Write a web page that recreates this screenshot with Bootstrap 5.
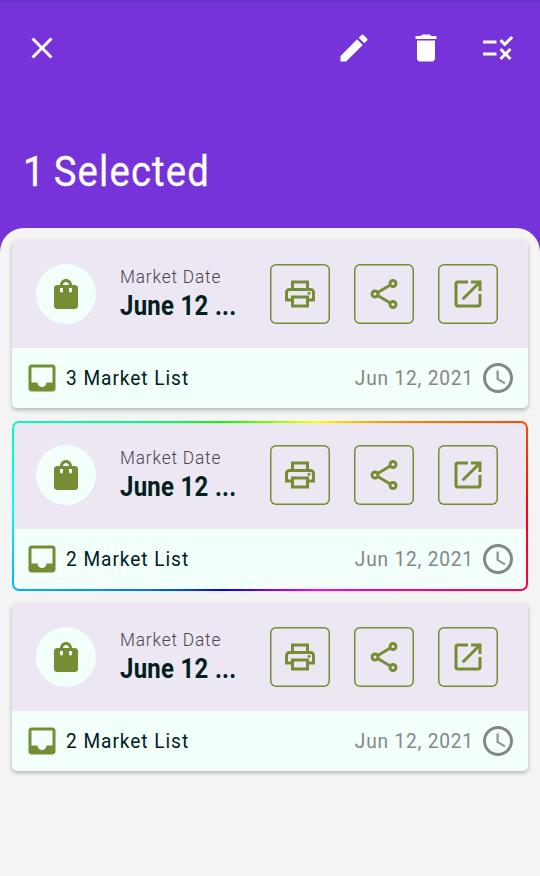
<!DOCTYPE html>
<html lang="en">
<head>
<meta charset="utf-8">
<meta name="viewport" content="width=device-width, initial-scale=1">
<title>Market lists</title>
<link href="https://cdn.jsdelivr.net/npm/bootstrap@5.3.0/dist/css/bootstrap.min.css" rel="stylesheet">
<style>
body{background:#7533d9;font-family:Roboto,"Liberation Sans",sans-serif;min-height:100vh;color:#00201c}
svg{width:36px;height:36px;fill:currentColor;display:block;flex:none}
.screen{height:876px;overflow:hidden}
.app-head{height:228px;background:linear-gradient(#6930c2,#7533d9 4px);padding:30px 24px 0}
.tools{gap:36px}
.fit{display:inline-block;transform-origin:0 50%;white-space:nowrap}
.title-text{font-size:43px;line-height:52px;margin:79px 0 0 -1px;font-weight:400;height:52px}
.title-text .fit{transform:scaleX(.89);letter-spacing:1.3px;word-spacing:-3px;-webkit-text-stroke:.3px currentColor}
.sheet{background:#f4f4f4;border-radius:24px 24px 0 0;padding:12px 12px 0;gap:13.5px}
.market{height:168px;border-radius:5px;overflow:hidden;background:#f2fffb;box-shadow:0 2px 4px rgba(0,0,0,.27)}
.market-top{height:108px;background:#ede7f3;padding:0 30px 0 24px}
.bag{width:60px;height:60px;background:#f2fffb;color:#768d34;margin-right:24px}
.label-text{font-size:19px;line-height:24px;font-weight:300;color:#49454f;height:24px}
.label-text .fit{letter-spacing:.9px;transform:scaleX(.91)}
.name-text{font-size:27.5px;line-height:34px;font-weight:700;height:34px}
.name-text .fit{transform:scaleX(.87);letter-spacing:.35px}
.names{width:126px;margin-right:24px;padding-bottom:1px}
.act{width:60px;height:60px;border:0;box-shadow:inset 0 0 0 1.5px #768d34;border-radius:6px;color:#768d34;background:none;padding:0}
.acts{gap:24px}
.market-foot{height:60px;padding:0 12px;font-size:21px;line-height:28px}
.olive{color:#768d34}
.count-text{margin-left:6px}
.count-text .fit{transform:scaleX(.91);letter-spacing:1.05px}
.when{color:#858786;gap:7px}
.when .fit{transform:scaleX(.91);transform-origin:100% 50%;letter-spacing:.9px;margin-right:-1px}
.picked{box-shadow:none;height:170px;border-radius:7px;padding:2px;margin:-.5px 0 -1.5px;background:conic-gradient(from 90deg,#f00,#f0f,#00f,#0ff,#0f0,#ff0,#f00)}
.picked .market-top{height:106px;padding:0 28px 2px 22px;border-radius:5px 5px 0 0}
.picked .market-foot{background:#f2fffb;padding:0 10px;border-radius:0 0 5px 5px}
</style>
</head>
<body>
<svg class="d-none" aria-hidden="true">
<symbol id="bag" viewBox="0 0 24 24"><path d="M18 6h-2c0-2.21-1.79-4-4-4S8 3.79 8 6H6c-1.1 0-2 .9-2 2v12c0 1.1.9 2 2 2h12c1.1 0 2-.9 2-2V8c0-1.1-.9-2-2-2zm-8 4c0 .55-.45 1-1 1s-1-.45-1-1V8h2v2zm2-6c1.1 0 2 .9 2 2h-4c0-1.1.9-2 2-2zm4 6c0 .55-.45 1-1 1s-1-.45-1-1V8h2v2z"/></symbol>
<symbol id="print" viewBox="0 0 24 24"><path d="M19 8h-1V3H6v5H5c-1.66 0-3 1.34-3 3v6h4v4h12v-4h4v-6c0-1.66-1.34-3-3-3zM8 5h8v3H8V5zm8 12v2H8v-4h8v2zm2-2v-2H6v2H4v-4c0-.55.45-1 1-1h14c.55 0 1 .45 1 1v4h-2z"/><circle cx="18" cy="11.5" r="1"/></symbol>
<symbol id="share" viewBox="0 0 24 24"><g fill="none" stroke="currentColor" stroke-width="1.95"><circle cx="18" cy="5" r="2"/><circle cx="6" cy="12" r="2"/><circle cx="18" cy="19" r="2"/><path d="M7.8 10.95 16.2 6.05M7.8 13.05l8.4 4.9"/></g></symbol>
<symbol id="open" viewBox="0 0 24 24"><path d="M19 19H5V5h7V3H5c-1.11 0-2 .9-2 2v14c0 1.1.89 2 2 2h14c1.1 0 2-.9 2-2v-7h-2v7zM14 3v2h3.59l-9.83 9.83 1.41 1.41L19 6.41V10h2V3h-7z"/></symbol>
<symbol id="inbox" viewBox="0 0 24 24"><path d="M19 3H4.99C3.88 3 3 3.9 3 5v14c0 1.1.88 2 1.99 2H19c1.1 0 2-.9 2-2V5c0-1.1-.9-2-2-2zm0 12h-4c0 1.66-1.35 3-3 3s-3-1.34-3-3H4.99V5H19v10z"/></symbol>
<symbol id="clock" viewBox="0 0 24 24"><path d="M11.99 2C6.47 2 2 6.48 2 12s4.47 10 9.99 10C17.52 22 22 17.52 22 12S17.52 2 11.99 2zM12 20c-4.42 0-8-3.58-8-8s3.58-8 8-8 8 3.58 8 8-3.58 8-8 8z"/><path opacity=".9" d="M12.5 7H11v6l5.25 3.15.75-1.23-4.5-2.67z"/></symbol>
</svg>
<div class="screen d-flex flex-column">
<header class="app-head text-white">
<div class="d-flex justify-content-between">
<svg viewBox="0 0 24 24"><path d="M19 6.41 17.59 5 12 10.59 6.41 5 5 6.41 10.59 12 5 17.59 6.41 19 12 13.41 17.59 19 19 17.59 13.41 12z"/></svg>
<div class="d-flex tools">
<svg viewBox="0 0 24 24"><path d="M3 17.25V21h3.75L17.81 9.94l-3.75-3.75L3 17.25zM20.71 7.04a1 1 0 0 0 0-1.41l-2.34-2.34a1 1 0 0 0-1.41 0l-1.83 1.83 3.75 3.75 1.83-1.83z"/></svg>
<svg viewBox="0 0 24 24"><path d="M6 19c0 1.1.9 2 2 2h8c1.1 0 2-.9 2-2V7H6v12zM19 4h-3.5l-1-1h-5l-1 1H5v2h14V4z"/></svg>
<svg viewBox="0 0 24 24"><path d="M16.54 11 13 7.46l1.41-1.41 2.12 2.12 4.24-4.24 1.41 1.41L16.54 11zM11 7H2v2h9V7zm10 6.41L19.59 12 17 14.59 14.41 12 13 13.41 15.59 16 13 18.59 14.41 20 17 17.41 19.59 20 21 18.59 18.41 16 21 13.41zM11 15H2v2h9v-2z"/></svg>
</div>
</div>
<h1 class="title-text"><span class="fit">1 Selected</span></h1>
</header>
<main class="sheet d-flex flex-column flex-grow-1">
<article class="market flex-shrink-0">
<div class="market-top d-flex align-items-center">
<div class="bag rounded-circle d-flex align-items-center justify-content-center"><svg><use href="#bag"/></svg></div>
<div class="names"><div class="label-text"><span class="fit">Market Date</span></div><div class="name-text"><span class="fit">June 12 ...</span></div></div>
<div class="acts d-flex"><button class="act d-flex align-items-center justify-content-center" aria-label="Print"><svg><use href="#print"/></svg></button><button class="act d-flex align-items-center justify-content-center" aria-label="Share"><svg><use href="#share"/></svg></button><button class="act d-flex align-items-center justify-content-center" aria-label="Open"><svg><use href="#open"/></svg></button></div>
</div>
<div class="market-foot d-flex align-items-center"><svg class="olive"><use href="#inbox"/></svg><div class="count-text"><span class="fit">3 Market List</span></div><div class="when d-flex align-items-center ms-auto"><span class="fit">Jun 12, 2021</span><svg><use href="#clock"/></svg></div></div>
</article>
<article class="market picked flex-shrink-0">
<div class="market-top d-flex align-items-center">
<div class="bag rounded-circle d-flex align-items-center justify-content-center"><svg><use href="#bag"/></svg></div>
<div class="names"><div class="label-text"><span class="fit">Market Date</span></div><div class="name-text"><span class="fit">June 12 ...</span></div></div>
<div class="acts d-flex"><button class="act d-flex align-items-center justify-content-center" aria-label="Print"><svg><use href="#print"/></svg></button><button class="act d-flex align-items-center justify-content-center" aria-label="Share"><svg><use href="#share"/></svg></button><button class="act d-flex align-items-center justify-content-center" aria-label="Open"><svg><use href="#open"/></svg></button></div>
</div>
<div class="market-foot d-flex align-items-center"><svg class="olive"><use href="#inbox"/></svg><div class="count-text"><span class="fit">2 Market List</span></div><div class="when d-flex align-items-center ms-auto"><span class="fit">Jun 12, 2021</span><svg><use href="#clock"/></svg></div></div>
</article>
<article class="market flex-shrink-0">
<div class="market-top d-flex align-items-center">
<div class="bag rounded-circle d-flex align-items-center justify-content-center"><svg><use href="#bag"/></svg></div>
<div class="names"><div class="label-text"><span class="fit">Market Date</span></div><div class="name-text"><span class="fit">June 12 ...</span></div></div>
<div class="acts d-flex"><button class="act d-flex align-items-center justify-content-center" aria-label="Print"><svg><use href="#print"/></svg></button><button class="act d-flex align-items-center justify-content-center" aria-label="Share"><svg><use href="#share"/></svg></button><button class="act d-flex align-items-center justify-content-center" aria-label="Open"><svg><use href="#open"/></svg></button></div>
</div>
<div class="market-foot d-flex align-items-center"><svg class="olive"><use href="#inbox"/></svg><div class="count-text"><span class="fit">2 Market List</span></div><div class="when d-flex align-items-center ms-auto"><span class="fit">Jun 12, 2021</span><svg><use href="#clock"/></svg></div></div>
</article>
</main>
</div>
<script src="https://cdn.jsdelivr.net/npm/bootstrap@5.3.0/dist/js/bootstrap.bundle.min.js"></script>
</body>
</html>
